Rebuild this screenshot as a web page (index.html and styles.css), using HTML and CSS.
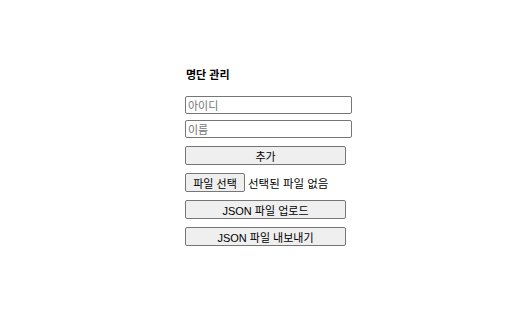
FILE: index.html
```html
<!DOCTYPE html>
<html lang="ko">
<head>
<meta charset="utf-8">
<link rel="stylesheet" href="styles.css">
</head>
<body>
<div class="panel">
  <h3 class="title">명단 관리</h3>
  <input class="field" type="text" placeholder="아이디">
  <input class="field field-second" type="text" placeholder="이름">
  <button class="btn">추가</button>
  <div class="file-row">
    <button class="file-btn">파일 선택</button>
    <span class="file-name">선택된 파일 없음</span>
  </div>
  <button class="btn">JSON 파일 업로드</button>
  <button class="btn">JSON 파일 내보내기</button>
</div>
</body>
</html>
```
FILE: styles.css
```css
html, body {
  margin: 0;
  padding: 0;
  background: #ffffff;
}
body {
  font-family: "Noto Sans CJK KR", "Liberation Sans", sans-serif;
  font-size: 11px;
  color: #000;
}
.panel {
  display: flex;
  flex-direction: column;
  align-items: flex-start;
  gap: 8px;
  padding: 67px 0 0 185px;
}
.title {
  margin: 0 0 7px 1px;
  font-size: 11px;
  font-weight: bold;
  line-height: 14px;
}
.field {
  box-sizing: border-box;
  width: 167px;
  height: 18px;
  margin: 0;
  padding: 0 2px;
  border: 1px solid #767676;
  border-radius: 2px;
  font: 11px "Noto Sans CJK KR", "Liberation Sans", sans-serif;
}
.field-second {
  margin-top: -2px;
}
.field::placeholder {
  color: #757575;
}
.btn, .file-btn {
  box-sizing: border-box;
  height: 19px;
  margin: 0;
  padding: 0;
  background: #efefef;
  border: 1px solid #767676;
  border-radius: 2px;
  font: 11px "Liberation Sans", "Noto Sans CJK KR", sans-serif;
  color: #000;
}
.btn {
  width: 161px;
}
.file-row {
  display: flex;
  align-items: center;
  gap: 3px;
}
.file-btn {
  width: 60px;
}
.file-name {
  font: 11.5px "Liberation Sans", "Noto Sans CJK KR", sans-serif;
}
```
